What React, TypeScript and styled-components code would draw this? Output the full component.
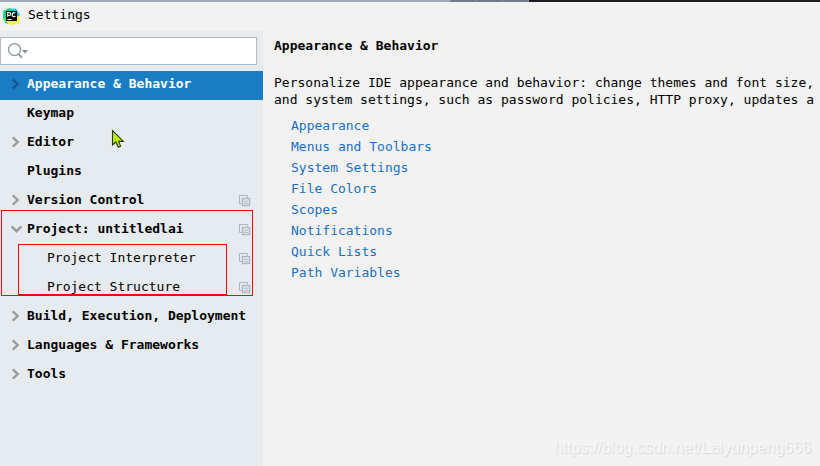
import React from "react";
import styled, { createGlobalStyle } from "styled-components";

const GlobalStyle = createGlobalStyle`
  * { box-sizing: border-box; }
  body {
    margin: 0;
    background: #f2f2f2;
    color: #000;
    font-family: "DejaVu Sans Mono", monospace;
    font-size: 13px;
    line-height: 17px;
    overflow: hidden;
  }
`;

const Window = styled.div`
  position: relative;
  display: flex;
  flex-direction: column;
  min-height: 100vh;
  overflow: hidden;
`;

const Backdrop = styled.div`
  display: flex;
  height: 2px;
  background: #1f1d24;
`;

const BackdropPiece = styled.span<{ $width: number; $color: string }>`
  width: ${(p) => p.$width}px;
  background: ${(p) => p.$color};
  border-right: 1px solid #8c929e;
`;

const TitleBar = styled.header`
  display: flex;
  align-items: center;
  gap: 8px;
  height: 29px;
  padding: 0 0 4px 3px;
  svg { margin-top: 4px; }
`;

const Title = styled.h1`
  margin: 0;
  font-size: 13px;
  font-weight: 400;
`;

const Body = styled.div`
  display: flex;
  flex: 1;
`;

const Sidebar = styled.aside`
  flex: 0 0 263px;
  padding-top: 6px;
  background: #e6ebef;
`;

const SearchBox = styled.label`
  display: flex;
  align-items: center;
  height: 28px;
  margin-right: 6px;
  padding-left: 6px;
  background: #fff;
  border: 1px solid #b5bac0;
`;

const SearchInput = styled.input`
  flex: 1;
  min-width: 0;
  border: 0;
  outline: 0;
  background: transparent;
  font: inherit;
`;

const Tree = styled.nav`
  position: relative;
  margin-top: 6px;
`;

const Row = styled.button<{ $selected?: boolean; $child?: boolean }>`
  display: flex;
  align-items: center;
  width: 100%;
  height: 29px;
  padding: 0 12px 4px ${(p) => (p.$child ? 47 : 9)}px;
  border: 0;
  background: ${(p) => (p.$selected ? "#1a7dc4" : "transparent")};
  color: ${(p) => (p.$selected ? "#fff" : "#000")};
  font: inherit;
  font-weight: ${(p) => (p.$child ? 400 : 700)};
  text-align: left;
  white-space: nowrap;
`;

const ArrowSlot = styled.span`
  display: flex;
  flex: 0 0 18px;
  padding-top: 1px;
`;

const RowLabel = styled.span`
  flex: 1;
`;

const ScopeSlot = styled.span`
  display: flex;
  padding-top: 2px;
`;

const Highlight = styled.div<{ $x: number; $y: number; $w: number; $h: number }>`
  position: absolute;
  left: ${(p) => p.$x}px;
  top: ${(p) => p.$y}px;
  width: ${(p) => p.$w}px;
  height: ${(p) => p.$h}px;
  border: 1px solid #f00;
  pointer-events: none;
`;

const Pointer = styled.svg`
  position: absolute;
  left: 111px;
  top: 58px;
  pointer-events: none;
`;

const Content = styled.main`
  flex: 1;
  min-width: 0;
  padding: 6px 0 0 11px;
  overflow: hidden;
`;

const Heading = styled.h2`
  margin: 0 0 20px;
  font-size: 13px;
  font-weight: 700;
`;

const Description = styled.p`
  margin: 0;
  white-space: nowrap;
`;

const Links = styled.ul`
  display: flex;
  flex-direction: column;
  align-items: flex-start;
  margin: 7px 0 0;
  padding: 0 0 0 17px;
  list-style: none;
`;

const Link = styled.a`
  display: block;
  line-height: 21px;
  color: #1a70c0;
  text-decoration: none;
`;

const Watermark = styled.div`
  position: absolute;
  right: 9px;
  bottom: 8px;
  font-family: "Liberation Sans", Arial, sans-serif;
  font-size: 16px;
  line-height: 20px;
  color: #f7f7f7;
  text-shadow: 1px 1px 1px #d6d6d6;
`;

function AppIcon() {
  return (
    <svg width="17" height="17" viewBox="0 0 17 17" aria-hidden="true">
      <path d="M0 3 6 0 11 1 9 16 3 15 0 11Z" fill="#21d789" />
      <path d="M9 1 13 0.5 17 7 14 10 9 8Z" fill="#20c6ea" />
      <path d="M13 7 17 9 16 15 10 17 4 16 3 12Z" fill="#f6f43c" />
      <path d="M0 9 4 12 5 16 2 15Z" fill="#5be064" />
      <rect x="3" y="3" width="11" height="10" fill="#080808" />
      <path d="M4.6 8.8V4.6H6.2Q7.8 4.6 7.8 6T6.2 7.4H4.8M12.4 5.2Q11.8 4.6 10.9 4.6 9.2 4.6 9.2 6.7T10.9 8.6Q11.8 8.6 12.4 8M4.5 11.5H8.5" fill="none" stroke="#fff" strokeWidth="1.1" />
    </svg>
  );
}

function SearchIcon() {
  return (
    <svg width="22" height="18" viewBox="0 0 22 18" aria-hidden="true">
      <circle cx="7.5" cy="7.6" r="6" fill="none" stroke="#919ba3" strokeWidth="1.4" />
      <path d="M11.6 12 15 15.8" stroke="#919ba3" strokeWidth="2" />
      <path d="M15 8H21L18 11.5Z" fill="#7f8b94" />
    </svg>
  );
}

function Arrow({ open, color }: { open?: boolean; color: string }) {
  return (
    <svg width="14" height="14" viewBox="0 0 14 14" aria-hidden="true">
      <path d={open ? "M2.6 4.4 7.5 9.2 12.4 4.4" : "M3.8 2.4 8.7 7 3.8 11.6"} fill="none" stroke={color} strokeWidth="2.4" />
    </svg>
  );
}

function ScopeIcon() {
  return (
    <svg width="12" height="12" viewBox="0 0 12 12" fill="none" stroke="#adb6bd" aria-hidden="true">
      <path d="M2.5 8.5H0.5V0.5H8.5V2.5" />
      <rect x="3.5" y="3.5" width="7" height="7" strokeWidth="1.4" />
      <path d="M5 6.2H9M5 8.4H9" />
    </svg>
  );
}

type Item = { label: string; state?: "open" | "closed"; selected?: boolean; child?: boolean; scoped?: boolean };

const items: Item[] = [
  { label: "Appearance & Behavior", state: "closed", selected: true },
  { label: "Keymap" },
  { label: "Editor", state: "closed" },
  { label: "Plugins" },
  { label: "Version Control", state: "closed", scoped: true },
  { label: "Project: untitledlai", state: "open", scoped: true },
  { label: "Project Interpreter", child: true, scoped: true },
  { label: "Project Structure", child: true, scoped: true },
  { label: "Build, Execution, Deployment", state: "closed" },
  { label: "Languages & Frameworks", state: "closed" },
  { label: "Tools", state: "closed" },
];

const links = [
  "Appearance",
  "Menus and Toolbars",
  "System Settings",
  "File Colors",
  "Scopes",
  "Notifications",
  "Quick Lists",
  "Path Variables",
];

export default function App() {
  return (
    <Window>
      <GlobalStyle />
      <Backdrop>
        <BackdropPiece $width={451} $color="#a0a8b6" />
        <BackdropPiece $width={26} $color="#737987" />
        <BackdropPiece $width={26} $color="#737987" />
        <BackdropPiece $width={26} $color="#737987" />
      </Backdrop>
      <TitleBar>
        <AppIcon />
        <Title>Settings</Title>
      </TitleBar>
      <Body>
        <Sidebar>
          <SearchBox>
            <SearchIcon />
            <SearchInput type="text" aria-label="Search settings" />
          </SearchBox>
          <Tree aria-label="Settings">
            {items.map((item) => (
              <Row
                key={item.label}
                type="button"
                $selected={item.selected}
                $child={item.child}
                aria-expanded={item.state ? item.state === "open" : undefined}
              >
                {!item.child && (
                  <ArrowSlot>
                    {item.state && <Arrow open={item.state === "open"} color={item.selected ? "#14568a" : "#999da0"} />}
                  </ArrowSlot>
                )}
                <RowLabel>{item.label}</RowLabel>
                {item.scoped && (
                  <ScopeSlot>
                    <ScopeIcon />
                  </ScopeSlot>
                )}
              </Row>
            ))}
            <Highlight $x={1} $y={139} $w={252} $h={86} />
            <Highlight $x={18} $y={173} $w={209} $h={51} />
            <Pointer width="15" height="20" viewBox="0 0 15 20" aria-hidden="true">
              <path d="M1.5 1.5V16L4.8 13 7.3 18.2 9.6 17.2 7.6 12.4H12.4Z" fill="#b8f400" stroke="#2c3410" strokeWidth="1.1" />
            </Pointer>
          </Tree>
        </Sidebar>
        <Content>
          <Heading>Appearance &amp; Behavior</Heading>
          <Description>
            Personalize IDE appearance and behavior: change themes and font size,
            <br />
            and system settings, such as password policies, HTTP proxy, updates a
          </Description>
          <Links>
            {links.map((label) => (
              <li key={label}>
                <Link href="#">{label}</Link>
              </li>
            ))}
          </Links>
        </Content>
      </Body>
      <Watermark>https://blog.csdn.net/Laiyunpeng666</Watermark>
    </Window>
  );
}
